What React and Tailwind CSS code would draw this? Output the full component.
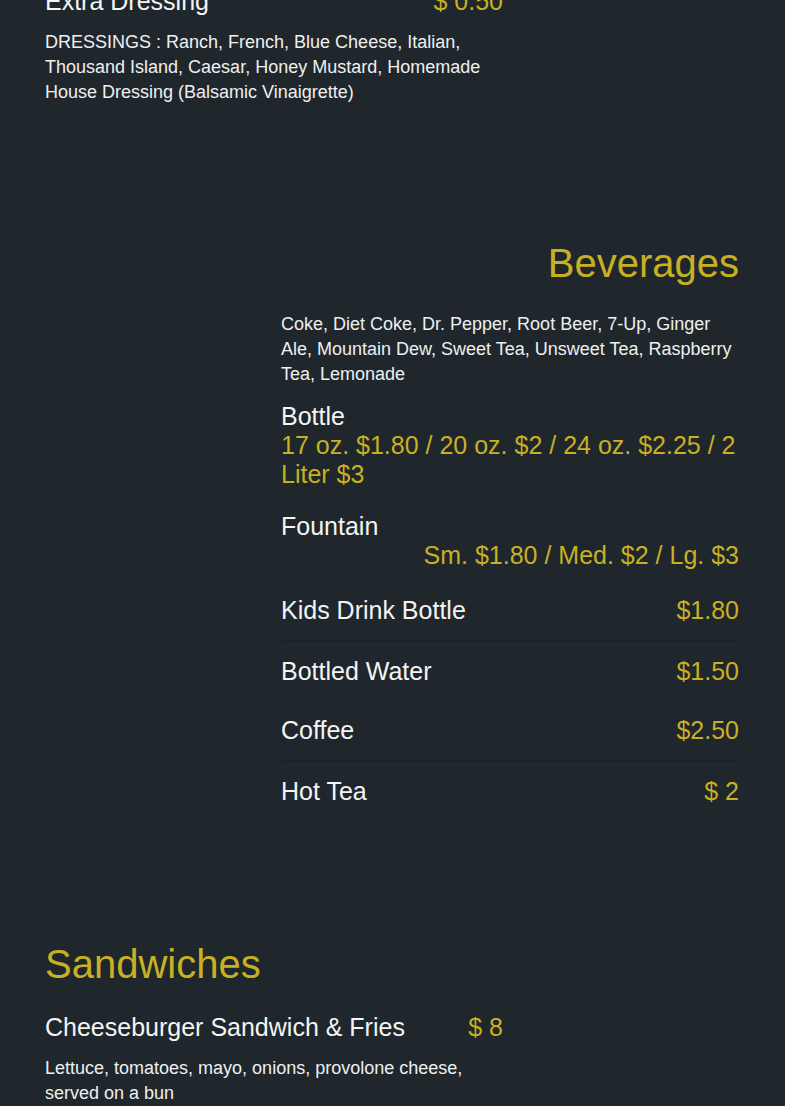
import React from "react";

const GOLD = "text-[#c8b023]";

function Row({ name, price, border }) {
  return (
    <div
      className={`h-[60px] flex items-center justify-between ${
        border ? "border-b border-[#1a2126]" : ""
      }`}
    >
      <span className="text-[25px] leading-[29px] text-[#f4f4f4]">{name}</span>
      <span className={`text-[25px] leading-[29px] ${GOLD}`}>{price}</span>
    </div>
  );
}

export default function App() {
  return (
    <div className="min-h-screen bg-[#1f272d] font-[Liberation_Sans,Arial,sans-serif] overflow-hidden">
      <div className="pl-[45px] pr-[46px] pb-[40px]">
        {/* Dressing section (end) */}
        <section className="w-[458px] -mt-[13px]">
          <div className="flex items-baseline justify-between">
            <span className="text-[25px] leading-[29px] text-[#f4f4f4]">Extra Dressing</span>
            <span className={`text-[25px] leading-[29px] ${GOLD}`}>$ 0.50</span>
          </div>
          <p className="mt-[14px] text-[18px] leading-[25px] text-[#efefef]">
            DRESSINGS : Ranch, French, Blue Cheese, Italian, Thousand Island, Caesar, Honey
            Mustard, Homemade House Dressing (Balsamic Vinaigrette)
          </p>
        </section>

        {/* Beverages */}
        <section className="ml-auto w-[458px] mt-[134px]">
          <h2 className={`text-right text-[40px] leading-[48px] ${GOLD}`}>Beverages</h2>
          <p className="mt-[25px] text-[18px] leading-[25px] text-[#efefef]">
            Coke, Diet Coke, Dr. Pepper, Root Beer, 7-Up, Ginger Ale, Mountain Dew, Sweet Tea,
            Unsweet Tea, Raspberry Tea, Lemonade
          </p>
          <div className="mt-[15px]">
            <div className="text-[25px] leading-[29px] text-[#f4f4f4]">Bottle</div>
            <div className={`text-[25px] leading-[29px] ${GOLD}`}>
              17 oz. $1.80 / 20 oz. $2 / 24 oz. $2.25 / 2 Liter $3
            </div>
          </div>
          <div className="mt-[23px]">
            <div className="text-[25px] leading-[29px] text-[#f4f4f4]">Fountain</div>
            <div className={`text-right text-[25px] leading-[29px] ${GOLD}`}>
              Sm. $1.80 / Med. $2 / Lg. $3
            </div>
          </div>
          <div className="mt-[11px]">
            <Row name="Kids Drink Bottle" price="$1.80" border />
            <Row name="Bottled Water" price="$1.50" />
            <Row name="Coffee" price="$2.50" border />
            <Row name="Hot Tea" price="$ 2" />
          </div>
        </section>

        {/* Sandwiches */}
        <section className="w-[458px] mt-[119px]">
          <h2 className={`text-[40px] leading-[48px] ${GOLD}`}>Sandwiches</h2>
          <div className="mt-[25px] flex items-baseline justify-between">
            <span className="text-[25px] leading-[29px] text-[#f4f4f4]">
              Cheeseburger Sandwich &amp; Fries
            </span>
            <span className={`text-[25px] leading-[29px] ${GOLD}`}>$ 8</span>
          </div>
          <p className="mt-[14px] text-[18px] leading-[25px] text-[#efefef]">
            Lettuce, tomatoes, mayo, onions, provolone cheese, served on a bun
          </p>
        </section>
      </div>
    </div>
  );
}
